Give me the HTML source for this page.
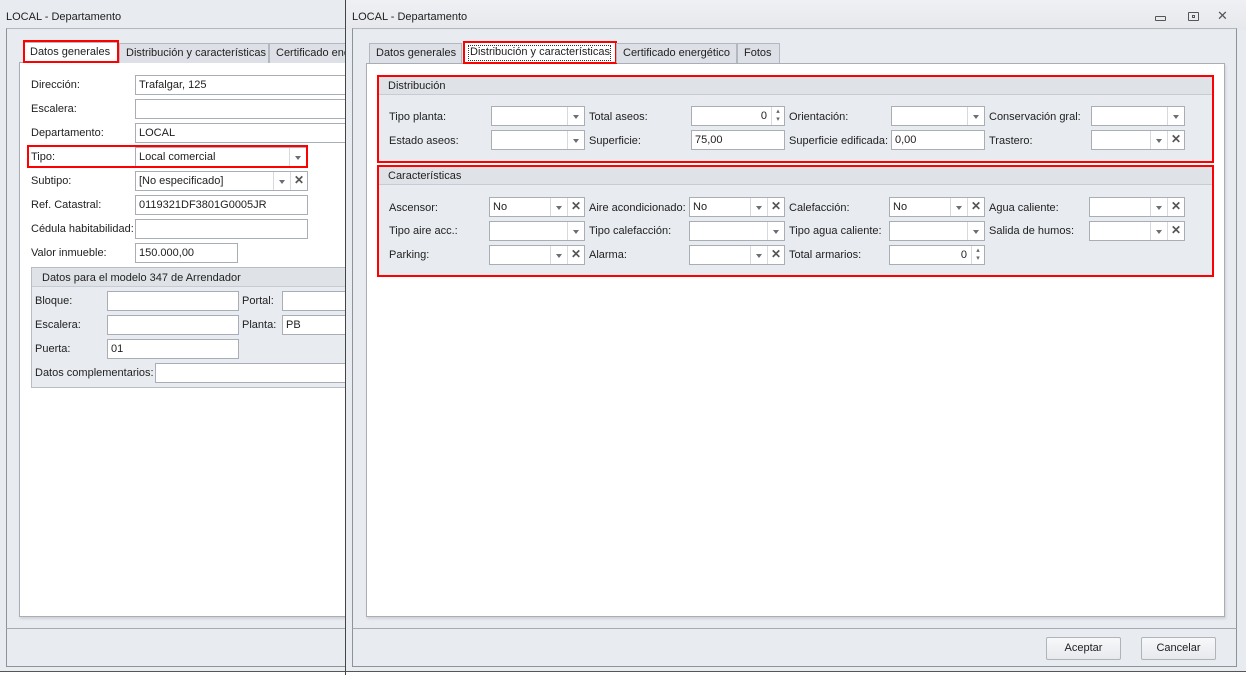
<!DOCTYPE html>
<html><head><meta charset="utf-8"><style>
*{box-sizing:border-box;margin:0;padding:0}
body{width:1246px;height:675px;position:relative;overflow:hidden;background:#e8ebf0;font-family:"Liberation Sans",Tahoma,sans-serif;font-size:11px;color:#1e1e1e}
div,span{position:absolute}
.t{white-space:nowrap;line-height:14px}
.i{background:#fff;border:1px solid #a9adb5;height:20px;line-height:18px;padding-left:3px;white-space:nowrap;overflow:hidden}
.dd{top:0;right:0;width:17px;height:18px;border-left:1px solid #d6d9de;background:#fff}
.dd:after{content:"";position:absolute;left:5px;top:8px;border-left:3.5px solid transparent;border-right:3.5px solid transparent;border-top:4px solid #6a6e75}
.xx{top:0;right:0;width:17px;height:18px;border-left:1px solid #d6d9de;background:#fff;font-size:12px;font-weight:bold;color:#555;text-align:center;line-height:17px}
.sp{top:0;right:0;width:13px;height:18px;border-left:1px solid #d6d9de;font-size:7px;color:#666;text-align:center;line-height:8px;padding-top:1px}
.red{border:2px solid #ff0000}
.tab{height:20px;border:1px solid #b3b7be;border-bottom:none;background:#dde0e6;line-height:18px;padding:0 6px;white-space:nowrap;overflow:hidden}
.hdr{background:#dfe2e7;border-bottom:1px solid #c8ccd2}
.btn{border:1px solid #b0b4ba;border-radius:2px;background:linear-gradient(#f7f8fa,#e7e9ed);text-align:center;line-height:20px;height:23px}
</style></head><body>

<!-- LEFT WINDOW -->
<div style="left:0;top:0;width:346px;height:675px;background:#e8ebf0;border-right:1px solid #555"></div>
<div class="t" style="left:6px;top:10px">LOCAL - Departamento</div>
<div style="left:6px;top:28px;width:340px;height:601px;border-left:1px solid #8e9299;border-top:1px solid #b3b7be;border-bottom:1px solid #a6aab1"></div>
<div style="left:6px;top:629px;width:340px;height:38px;border-left:1px solid #8e9299;border-bottom:1px solid #8e9299"></div>
<div style="left:0;top:671px;width:346px;height:4px;border-top:1px solid #555;background:#fff"></div>
<div style="left:19px;top:62px;width:330px;height:555px;background:#fff;border:1px solid #a9adb5;box-shadow:1px 2px 2px #d0d3d8"></div>
<div class="tab" style="left:23px;top:42px;width:96px;background:#fff;height:21px">Datos generales</div>
<div class="red" style="left:23px;top:40px;width:96px;height:23px"></div>
<div class="tab" style="left:119px;top:43px;width:150px">Distribución y características</div>
<div class="tab" style="left:269px;top:43px;width:90px">Certificado energético</div>

<div class="t" style="left:31px;top:78px">Dirección:</div><div class="i" style="left:135px;top:75px;width:220px">Trafalgar, 125</div>
<div class="t" style="left:31px;top:102px">Escalera:</div><div class="i" style="left:135px;top:99px;width:220px"></div>
<div class="t" style="left:31px;top:126px">Departamento:</div><div class="i" style="left:135px;top:123px;width:220px">LOCAL</div>
<div class="t" style="left:31px;top:150px">Tipo:</div><div class="i" style="left:135px;top:147px;width:172px">Local comercial<span class="dd"></span></div>
<div class="red" style="left:27px;top:145px;width:281px;height:23px"></div>
<div class="t" style="left:31px;top:174px">Subtipo:</div><div class="i" style="left:135px;top:171px;width:173px">[No especificado]<span class="xx">✕</span><span class="dd" style="right:17px"></span></div>
<div class="t" style="left:31px;top:198px">Ref. Catastral:</div><div class="i" style="left:135px;top:195px;width:173px">0119321DF3801G0005JR</div>
<div class="t" style="left:31px;top:222px">Cédula habitabilidad:</div><div class="i" style="left:135px;top:219px;width:173px"></div>
<div class="t" style="left:31px;top:246px">Valor inmueble:</div><div class="i" style="left:135px;top:243px;width:103px">150.000,00</div>

<div style="left:31px;top:267px;width:320px;height:121px;background:#e8ebf0;border:1px solid #b8bcc3"></div>
<div class="hdr" style="left:32px;top:268px;width:318px;height:19px"></div>
<div class="t" style="left:42px;top:271px">Datos para el modelo 347 de Arrendador</div>
<div class="t" style="left:35px;top:294px">Bloque:</div><div class="i" style="left:107px;top:291px;width:132px"></div>
<div class="t" style="left:242px;top:294px">Portal:</div><div class="i" style="left:282px;top:291px;width:70px"></div>
<div class="t" style="left:35px;top:318px">Escalera:</div><div class="i" style="left:107px;top:315px;width:132px"></div>
<div class="t" style="left:242px;top:318px">Planta:</div><div class="i" style="left:282px;top:315px;width:70px">PB</div>
<div class="t" style="left:35px;top:342px">Puerta:</div><div class="i" style="left:107px;top:339px;width:132px">01</div>
<div class="t" style="left:35px;top:366px">Datos complementarios:</div><div class="i" style="left:155px;top:363px;width:200px"></div>

<!-- RIGHT WINDOW -->
<div style="left:345px;top:0;width:901px;height:675px;background:#e8ebf0;border-left:1px solid #444"></div>
<div style="left:346px;top:0;width:900px;height:30px;background:linear-gradient(#eef0f3,#e6e8ec)"></div>
<div class="t" style="left:352px;top:10px">LOCAL - Departamento</div>
<div style="left:1155px;top:16px;width:11px;height:5px;border:1px solid #555;border-radius:1px"></div>
<div style="left:1188px;top:12px;width:11px;height:9px;border:1px solid #555;border-radius:1px"><span style="left:3px;top:2px;width:3px;height:3px;border:1px solid #555"></span></div>
<div class="t" style="left:1217px;top:9px;font-size:13px;color:#555">✕</div>
<div style="left:352px;top:28px;width:885px;height:601px;border-left:1px solid #8e9299;border-top:1px solid #b3b7be;border-right:1px solid #8e9299;border-bottom:1px solid #a6aab1"></div>
<div style="left:352px;top:629px;width:885px;height:38px;border-left:1px solid #8e9299;border-right:1px solid #8e9299;border-bottom:1px solid #8e9299"></div>
<div style="left:346px;top:671px;width:900px;height:4px;border-top:1px solid #555;background:#fff"></div>
<div style="left:366px;top:63px;width:859px;height:554px;background:#fff;border:1px solid #a9adb5;box-shadow:1px 2px 2px #d0d3d8"></div>
<div class="tab" style="left:369px;top:43px;width:93px">Datos generales</div>
<div class="tab" style="left:463px;top:42px;width:153px;background:#fff;height:22px;border-color:#fff"><span style="left:4px;top:2px;width:143px;height:16px;border:1px dotted #333"></span>Distribución y características</div>
<div class="red" style="left:463px;top:41px;width:154px;height:23px"></div>
<div class="tab" style="left:616px;top:43px;width:121px">Certificado energético</div>
<div class="tab" style="left:737px;top:43px;width:43px">Fotos</div>

<!-- Distribución -->
<div style="left:379px;top:77px;width:833px;height:84px;background:#e8ebf0"></div>
<div class="hdr" style="left:379px;top:77px;width:833px;height:18px"></div>
<div class="t" style="left:388px;top:79px">Distribución</div>
<div class="red" style="left:377px;top:75px;width:837px;height:88px"></div>
<div class="t" style="left:389px;top:110px">Tipo planta:</div><div class="i" style="left:491px;top:106px;width:94px"><span class="dd"></span></div>
<div class="t" style="left:589px;top:110px">Total aseos:</div><div class="i" style="left:691px;top:106px;width:94px;text-align:right;padding-right:17px">0<span class="sp">▴<br>▾</span></div>
<div class="t" style="left:789px;top:110px">Orientación:</div><div class="i" style="left:891px;top:106px;width:94px"><span class="dd"></span></div>
<div class="t" style="left:989px;top:110px">Conservación gral:</div><div class="i" style="left:1091px;top:106px;width:94px"><span class="dd"></span></div>
<div class="t" style="left:389px;top:134px">Estado aseos:</div><div class="i" style="left:491px;top:130px;width:94px"><span class="dd"></span></div>
<div class="t" style="left:589px;top:134px">Superficie:</div><div class="i" style="left:691px;top:130px;width:94px">75,00</div>
<div class="t" style="left:789px;top:134px">Superficie edificada:</div><div class="i" style="left:891px;top:130px;width:94px">0,00</div>
<div class="t" style="left:989px;top:134px">Trastero:</div><div class="i" style="left:1091px;top:130px;width:94px"><span class="xx">✕</span><span class="dd" style="right:17px"></span></div>

<!-- Características -->
<div style="left:379px;top:167px;width:833px;height:108px;background:#e8ebf0"></div>
<div class="hdr" style="left:379px;top:167px;width:833px;height:18px"></div>
<div class="t" style="left:388px;top:169px">Características</div>
<div class="red" style="left:377px;top:165px;width:837px;height:112px"></div>
<div class="t" style="left:389px;top:201px">Ascensor:</div><div class="i" style="left:489px;top:197px;width:96px">No<span class="xx">✕</span><span class="dd" style="right:17px"></span></div>
<div class="t" style="left:589px;top:201px">Aire acondicionado:</div><div class="i" style="left:689px;top:197px;width:96px">No<span class="xx">✕</span><span class="dd" style="right:17px"></span></div>
<div class="t" style="left:789px;top:201px">Calefacción:</div><div class="i" style="left:889px;top:197px;width:96px">No<span class="xx">✕</span><span class="dd" style="right:17px"></span></div>
<div class="t" style="left:989px;top:201px">Agua caliente:</div><div class="i" style="left:1089px;top:197px;width:96px"><span class="xx">✕</span><span class="dd" style="right:17px"></span></div>
<div class="t" style="left:389px;top:224px">Tipo aire acc.:</div><div class="i" style="left:489px;top:221px;width:96px"><span class="dd"></span></div>
<div class="t" style="left:589px;top:224px">Tipo calefacción:</div><div class="i" style="left:689px;top:221px;width:96px"><span class="dd"></span></div>
<div class="t" style="left:789px;top:224px">Tipo agua caliente:</div><div class="i" style="left:889px;top:221px;width:96px"><span class="dd"></span></div>
<div class="t" style="left:989px;top:224px">Salida de humos:</div><div class="i" style="left:1089px;top:221px;width:96px"><span class="xx">✕</span><span class="dd" style="right:17px"></span></div>
<div class="t" style="left:389px;top:248px">Parking:</div><div class="i" style="left:489px;top:245px;width:96px"><span class="xx">✕</span><span class="dd" style="right:17px"></span></div>
<div class="t" style="left:589px;top:248px">Alarma:</div><div class="i" style="left:689px;top:245px;width:96px"><span class="xx">✕</span><span class="dd" style="right:17px"></span></div>
<div class="t" style="left:789px;top:248px">Total armarios:</div><div class="i" style="left:889px;top:245px;width:96px;text-align:right;padding-right:17px">0<span class="sp">▴<br>▾</span></div>

<div class="btn" style="left:1046px;top:637px;width:75px">Aceptar</div>
<div class="btn" style="left:1141px;top:637px;width:75px">Cancelar</div>
</body></html>
